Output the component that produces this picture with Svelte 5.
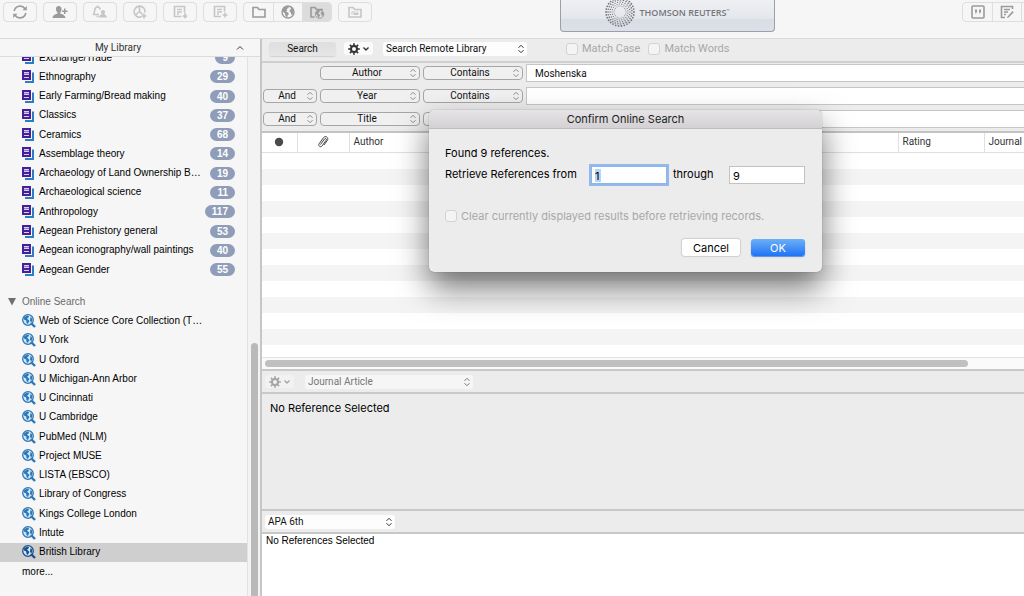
<svelte:options runes={true} />

<script lang="ts">
  interface Group {
    name: string;
    count: number;
  }

  const groups: Group[] = [
    { name: "Exchange/Trade", count: 9 },
    { name: "Ethnography", count: 29 },
    { name: "Early Farming/Bread making", count: 40 },
    { name: "Classics", count: 37 },
    { name: "Ceramics", count: 68 },
    { name: "Assemblage theory", count: 14 },
    { name: "Archaeology of Land Ownership B…", count: 19 },
    { name: "Archaeological science", count: 11 },
    { name: "Anthropology", count: 117 },
    { name: "Aegean Prehistory general", count: 53 },
    { name: "Aegean iconography/wall paintings", count: 40 },
    { name: "Aegean Gender", count: 55 },
  ];

  const sources = [
    "Web of Science Core Collection (T…",
    "U York",
    "U Oxford",
    "U Michigan-Ann Arbor",
    "U Cincinnati",
    "U Cambridge",
    "PubMed (NLM)",
    "Project MUSE",
    "LISTA (EBSCO)",
    "Library of Congress",
    "Kings College London",
    "Intute",
    "British Library",
  ];

  let selectedSource = $state("British Library");

  let criteria = $state([
    { join: "", field: "Author", value: "Moshenska" },
    { join: "And", field: "Year", value: "" },
    { join: "And", field: "Title", value: "" },
  ]);

  const fields = ["Author", "Year", "Title"];

  let from = $state("1");
  let through = $state("9");

  // concentric rings of dots for the logo
  const dots = [6, 8, 10, 12, 14].flatMap((radius, ring) => {
    const count = 18 + ring * 3;
    return Array.from({ length: count }, (_, i) => {
      const angle = ((i + ring * 0.5) / count) * Math.PI * 2;
      return {
        x: 15 + Math.cos(angle) * radius,
        y: 15 + Math.sin(angle) * radius,
        r: 0.5 + ring * 0.1,
      };
    });
  });

  const teeth = [0, 45, 90, 135, 180, 225, 270, 315];
</script>

{#snippet arrows()}
  <svg class="arrows" viewBox="0 0 8 10" width="8" height="10" aria-hidden="true">
    <path d="M1.5 3.8 4 1.3l2.5 2.5M1.5 6.2 4 8.7l2.5-2.5" />
  </svg>
{/snippet}

{#snippet gear()}
  <svg class="gear" viewBox="0 0 12 12" width="12" height="12" aria-hidden="true">
    {#each teeth as angle}
      <rect x="5.2" y="0.2" width="1.6" height="3" transform="rotate({angle} 6 6)" />
    {/each}
    <circle cx="6" cy="6" r="3" fill="none" stroke="currentColor" stroke-width="2" />
  </svg>
  <svg viewBox="0 0 8 6" width="8" height="6" aria-hidden="true">
    <path d="M1.5 1.5 4 4l2.5-2.5" fill="none" stroke="currentColor" stroke-width="1.4" />
  </svg>
{/snippet}

{#snippet globe()}
  <circle cx="8" cy="8" r="6" fill="none" stroke="currentColor" stroke-width="1.4" />
  <path
    fill="currentColor"
    stroke="none"
    d="M3 4 6 2l3 .5-.6 1.7-1.900.9.8 1.500-1.300.9 2 1 .9 1.400-1.300 1.700-.4 2L5.500 12 5 9.500 2.500 7.500zM10.500 3l2 1.500 1.200 3-.6 2.500-1.600 1-.7-2.500-1.300-1 .3-1.700 1.200-.6z"
  />
{/snippet}

<div class="window">
  <header class="toolbar">
    <div class="tools">
      <button class="tool" aria-label="Sync library">
        <svg viewBox="0 0 16 16" width="16" height="16" class="line">
          <path d="M2.200 7A6 6 0 0 1 13 4.700M13.800 9A6 6 0 0 1 3 11.300" />
          <path class="fill" d="M10.500 6.300h4.300V2zM5.500 9.700H1.200V14z" />
        </svg>
      </button>
      <button class="tool" aria-label="Share library">
        <svg viewBox="0 0 16 16" width="16" height="16">
          <path d="M6.500 2c2.200 0 3.200 1.400 3 3.500-.1 1.300-.6 2.200-1.200 2.900v1c1.700.7 4.900 1.300 5.200 4.600H.5c.2-3.300 3.300-3.900 5-4.600v-1C4.700 7.700 4.100 6.800 4 5.500 3.900 3.400 4.600 2 6.500 2z" />
          <path d="M12 4.500h1.500v2h2V8h-2v2H12V8h-2V6.500h2z" />
        </svg>
      </button>
      <button class="tool faint" aria-label="Activity feed">
        <svg viewBox="0 0 16 16" width="16" height="16" class="line">
          <path d="M1 10.500c1.500-1 1.500-2.500 1.700-4.500C3 4 4 3 5.500 3S8 4 8.300 5.500M1 10.500h6M5.500 3V1.500M4.500 12.500h2" />
          <path class="fill" d="M11 6c1.500 0 2.200 1 2 2.500-.1.8-.4 1.300-.8 1.700 1.200.6 2.600 1.300 2.800 3.300H7c.2-2 1.500-2.700 2.800-3.300-.4-.4-.7-.9-.8-1.700C8.800 7 9.500 6 11 6z" />
        </svg>
      </button>
      <button class="tool faint" aria-label="Capture reference">
        <svg viewBox="0 0 16 16" width="16" height="16" class="line">
          <path d="M9.500 12.800A5.500 5.500 0 1 1 13 8.500M7.500 2.500v5L3.500 11M7.500 7.500l3 3M12 9.500v5M9.500 12h5" />
        </svg>
      </button>
      <button class="tool faint" aria-label="Import references">
        <svg viewBox="0 0 16 16" width="16" height="16" class="line">
          <path d="M9.500 12.500H2.500v-10h10V8M5 5.500h5M5 8h5M5 10h2M13 8.500v5M11 11.500l2 2 2-2" />
        </svg>
      </button>
      <button class="tool faint" aria-label="New reference">
        <svg viewBox="0 0 16 16" width="16" height="16" class="line">
          <path d="M9 12.500H2.500v-10h10V7.500M5 5.500h5M5 8h5M5 10h2M13 8.500v5M10.500 11h5" />
        </svg>
      </button>
      <div class="segments">
        <button aria-label="Local library">
          <svg viewBox="0 0 16 16" width="16" height="16" class="line">
            <path d="M2 13V3.500h4.500l1.500 2h6V13z" />
          </svg>
        </button>
        <button aria-label="Online search">
          <svg viewBox="0 0 16 16" width="16" height="16">{@render globe()}</svg>
        </button>
        <button class="active" aria-label="Integrated library and online search">
          <svg viewBox="0 0 16 16" width="16" height="16" class="line">
            <path d="M5.500 13H2V3.500h4l1.500 2H14" />
            <g transform="translate(5 4.500) scale(.7)">{@render globe()}</g>
          </svg>
        </button>
      </div>
      <button class="tool faint" aria-label="Open group">
        <svg viewBox="0 0 16 16" width="16" height="16" class="line">
          <path d="M2 13V3.500h4l1.500 2H14V13z" />
          <path class="fill" d="M4.500 7.500h4v1h-3v2h-1zM6.500 9h5v2h-5zM9.500 7.500h2v1h-2z" />
        </svg>
      </button>
    </div>

    <div class="brand">
      <svg viewBox="0 0 30 30" width="30" height="30" aria-hidden="true">
        {#each dots as dot}
          <circle cx={dot.x} cy={dot.y} r={dot.r} />
        {/each}
      </svg>
      <span>THOMSON REUTERS<sup>™</sup></span>
    </div>

    <div class="segments trailing">
      <button aria-label="Insert citation">
        <svg viewBox="0 0 16 16" width="16" height="16" class="line">
          <rect x="2" y="2" width="12" height="12" rx="1" />
          <path class="fill" d="M5 5.500h2V8L6 9.500H5L5.600 8H5zM9 5.500h2V8l-1 1.500H9L9.600 8H9z" />
        </svg>
      </button>
      <button aria-label="Format bibliography">
        <svg viewBox="0 0 16 16" width="16" height="16" class="line">
          <path d="M6 13.500H2.500v-11h11V5M5 5.500h6M5 8h4M5 10.500h2" />
          <path class="fill" d="m8.500 12.500 5-5.500 1.200 1.200-5 5.300-1.700.5z" />
        </svg>
      </button>
      <button aria-label="Word processor"></button>
    </div>
  </header>

  <div class="content">
    <aside class="sidebar">
      <div class="library-head">
        <h1>My Library</h1>
        <svg viewBox="0 0 8 6" width="8" height="6" aria-hidden="true">
          <path d="M1 4.500 4 1.500l3 3" fill="none" stroke="currentColor" />
        </svg>
      </div>
      <div class="tree-area">
        <ul class="tree">
          {#each groups as group}
            <li class="row">
              <svg viewBox="0 0 12 13" width="12" height="13" aria-hidden="true">
                <path d="M11 2.500v9.500H3" fill="none" stroke="#2f7cc4" stroke-width="2" />
                <path d="M0 0h9v10H0z" fill="#44209a" />
                <path d="M2 2h5v3H2zM2 7h5v1H2z" fill="#d8d0f0" />
                <path d="M2 3h5v1H2z" fill="#8d78cc" />
              </svg>
              <span class="name">{group.name}</span>
              <span class="count">{group.count}</span>
            </li>
          {/each}
          <li class="row section">
            <svg viewBox="0 0 8 8" width="8" height="8" aria-hidden="true">
              <path d="M0 0h8L4 7.500z" fill="#707070" />
            </svg>
            <span>Online Search</span>
          </li>
          {#each sources as source}
            <li class="row source" class:selected={selectedSource === source}>
              <svg viewBox="0 0 14 14" width="14" height="14" aria-hidden="true">
                <circle cx="6" cy="6" r="5.300" fill="#d4e8f7" stroke="currentColor" stroke-width="1.300" />
                <path
                  d="M2 3.500 5 1.500l2 .5-.5 1.500-1.500 1 1.500 1.500 1 1-1 1.500-.5 1.500-1.500-1L4.200 6.500 2 5.500zM8.500 3l1.700 1.500V7L9 8.500 8 6.500z"
                  fill="currentColor"
                />
                <path d="m9 9 4 4" stroke="currentColor" stroke-width="2.400" />
              </svg>
              <button class="name" onclick={() => (selectedSource = source)}>{source}</button>
            </li>
          {/each}
          <li class="row"><button>more...</button></li>
        </ul>
        <div class="track"><div class="thumb"></div></div>
      </div>
    </aside>

    <main>
      <div class="search-bar">
        <button class="search-btn">Search</button>
        <button class="gear-btn" aria-label="Search options">{@render gear()}</button>
        <span class="picker scope">
          <select aria-label="Search scope"><option>Search Remote Library</option></select>
          {@render arrows()}
        </span>
        <label class="check"><input type="checkbox" disabled /> Match Case</label>
        <label class="check"><input type="checkbox" disabled /> Match Words</label>
      </div>

      <div class="criteria">
        {#each criteria as row}
          <div class="criterion">
            {#if row.join}
              <span class="picker outlined">
                <select aria-label="Operator" bind:value={row.join}>
                  <option>And</option>
                  <option>Or</option>
                  <option>Not</option>
                </select>
                {@render arrows()}
              </span>
            {:else}
              <span></span>
            {/if}
            <span class="picker outlined">
              <select aria-label="Field" bind:value={row.field}>
                {#each fields as field}
                  <option>{field}</option>
                {/each}
              </select>
              {@render arrows()}
            </span>
            <span class="picker outlined">
              <select aria-label="Comparison"><option>Contains</option></select>
              {@render arrows()}
            </span>
            <input type="text" aria-label="Search text" bind:value={row.value} />
          </div>
        {/each}
      </div>

      <div class="results">
        <table>
          <thead>
            <tr>
              <th class="status">
                <svg viewBox="0 0 10 10" width="10" height="10" role="img" aria-label="Read">
                  <circle cx="5" cy="5" r="4.200" fill="#4a4a4a" />
                </svg>
              </th>
              <th class="clip">
                <svg viewBox="0 0 12 14" width="12" height="14" role="img" aria-label="Attachment">
                  <path
                    d="m3.500 9.500 4-5.500c1-1.200 2.500 0 1.700 1.200L5 11c-1.500 1.800-4.200 0-2.900-2.200L6.500 2.600C8.500.2 12 2.500 10.400 5.300L7 10"
                    fill="none"
                    stroke="#444"
                  />
                </svg>
              </th>
              <th>Author</th>
              <th class="rating">Rating</th>
              <th class="journal">Journal</th>
            </tr>
          </thead>
        </table>
        <div class="stripes"></div>
        <div class="hscroll"><div class="hthumb"></div></div>
      </div>

      <div class="bar">
        <button class="gear-btn" aria-label="Reference options" disabled>{@render gear()}</button>
        <span class="picker type">
          <select aria-label="Reference type" disabled><option>Journal Article</option></select>
          {@render arrows()}
        </span>
      </div>
      <section class="reference">No Reference Selected</section>
      <div class="bar">
        <span class="picker style">
          <select aria-label="Output style"><option>APA 6th</option></select>
          {@render arrows()}
        </span>
      </div>
      <section class="preview">No References Selected</section>
    </main>
  </div>

  <div class="dialog" role="dialog" aria-labelledby="dialog-title">
    <h2 id="dialog-title">Confirm Online Search</h2>
    <div class="dialog-body">
      <p>Found 9 references.</p>
      <div class="range">
        <label for="from">Retrieve References from</label>
        <input id="from" class="focused" type="text" bind:value={from} />
        <label for="through">through</label>
        <input id="through" type="text" bind:value={through} />
      </div>
      <label class="check">
        <input type="checkbox" disabled /> Clear currently displayed results before retrieving records.
      </label>
      <div class="actions">
        <button>Cancel</button>
        <button class="primary">OK</button>
      </div>
    </div>
  </div>
</div>

<style>
  :global(body) {
    margin: 0;
  }

  .window {
    position: relative;
    display: flex;
    flex-direction: column;
    height: 100vh;
    overflow: hidden;
    background: #f6f6f6;
    color: #111;
    font-family: Roboto, "Liberation Sans", sans-serif;
    font-size: 10px;
    line-height: 14px;
  }

  .window * {
    box-sizing: border-box;
  }

  button,
  input,
  select {
    margin: 0;
    padding: 0;
    border: 0;
    background: none;
    color: inherit;
    font: inherit;
  }

  svg {
    display: block;
    flex: none;
    fill: currentColor;
  }

  .line {
    fill: none;
    stroke: currentColor;
    stroke-width: 1.6;
  }

  .line .fill {
    fill: currentColor;
    stroke: none;
  }

  /* toolbar */
  .toolbar {
    display: flex;
    flex: none;
    justify-content: space-between;
    height: 38px;
    padding-left: 3px;
  }

  .tools {
    display: flex;
    gap: 6px;
    padding-top: 2px;
  }

  .tool,
  .segments {
    height: 20px;
    border: 1px solid #dedede;
    border-radius: 4px;
    color: #9b9b9b;
  }

  .tool {
    display: grid;
    place-items: center;
    width: 34px;
  }

  .tool.faint {
    color: #c6c6c6;
  }

  .segments {
    display: flex;
    overflow: hidden;
  }

  .segments button {
    display: grid;
    place-items: center;
    width: 29px;
  }

  .segments button + button {
    border-left: 1px solid #dedede;
  }

  .segments .active {
    background: #dcdcdc;
  }

  .trailing {
    margin: 2px -27px 0 0;
  }

  .brand {
    display: flex;
    align-items: center;
    justify-content: center;
    gap: 5px;
    width: 215px;
    height: 32px;
    padding-bottom: 8px;
    border: 1px solid #9b9fac;
    border-top: 0;
    border-radius: 0 0 4px 4px;
    background: linear-gradient(#eef0f4 0%, #e4e6eb 60%, #d9dde5 62%, #dde0e7 100%);
    color: #74767c;
    font-family: "Open Sans", sans-serif;
    font-size: 9px;
    font-weight: 600;
  }

  .brand sup {
    font-size: 4px;
  }

  .content {
    display: flex;
    flex: 1;
    min-height: 0;
    border-top: 1px solid #dadada;
  }

  /* sidebar */
  .sidebar {
    display: flex;
    flex: none;
    flex-direction: column;
    width: 262px;
    border-right: 2px solid #c6c6c6;
    font-family: "Liberation Sans", sans-serif;
  }

  .library-head {
    display: flex;
    flex: none;
    align-items: center;
    height: 18px;
    padding-right: 16px;
    border-bottom: 1px solid #dcdcdc;
    color: #333;
  }

  h1 {
    flex: 1;
    margin: 0;
    font-family: Roboto, sans-serif;
    font-size: 10px;
    font-weight: 400;
    text-align: center;
  }

  .tree-area {
    display: flex;
    flex: 1;
    min-height: 0;
    overflow: hidden;
  }

  .tree {
    display: flex;
    flex: 1;
    flex-direction: column;
    min-width: 0;
    margin: -9px 0 15px;
    padding: 0;
    list-style: none;
  }

  .row {
    display: flex;
    flex: 1 1 19px;
    align-items: center;
    gap: 5px;
    min-height: 19px;
    max-height: 20px;
    padding: 0 12px 0 22px;
    color: #000;
    white-space: nowrap;
  }

  .row .name {
    flex: 1;
    text-align: left;
  }

  .source {
    gap: 3px;
    color: #2b78b8;
  }

  .source button {
    color: #000;
  }

  .selected {
    background: #cfcfcf;
    color: #1b4f8c;
  }

  .section {
    gap: 6px;
    margin-top: 13px;
    padding-left: 8px;
    color: #6a6a6a;
  }

  .count {
    padding: 0 7px;
    border-radius: 7px;
    background: #8f9db9;
    color: #fff;
    font-weight: 700;
    line-height: 13px;
  }

  .track {
    display: flex;
    flex: none;
    align-items: flex-end;
    justify-content: center;
    width: 13px;
    border-left: 1px solid #e2e2e2;
    background: #f3f3f3;
  }

  .thumb {
    width: 7px;
    height: 47%;
    border-radius: 4px 4px 0 0;
    background: #b9b9b9;
  }

  /* main column */
  main {
    display: flex;
    flex: 1;
    flex-direction: column;
    min-width: 0;
    background: #ececec;
  }

  .search-bar {
    display: flex;
    flex: none;
    align-items: center;
    height: 24px;
    padding: 0 7px 3px;
    border-bottom: 2px solid #cfcfcf;
  }

  .search-btn {
    width: 67px;
    height: 14px;
    margin-right: 8px;
    border-radius: 3px;
    background: linear-gradient(#dedede, #e6e6e6);
    box-shadow: 0 1px 1px #d2d2d2;
  }

  .gear-btn {
    display: flex;
    align-items: center;
    justify-content: center;
    gap: 2px;
    width: 29px;
    height: 13px;
    border-radius: 3px;
    background: #fbfbfb;
    color: #333;
  }

  .gear-btn:disabled {
    background: #f2f2f2;
    color: #a5a5a5;
  }

  .picker {
    position: relative;
    display: block;
    height: 14px;
  }

  .picker select {
    appearance: none;
    width: 100%;
    height: 100%;
    padding: 0 12px 0 3px;
    border-radius: 3px;
    background: #fdfdfd;
    line-height: 12px;
    opacity: 1;
  }

  .picker select:disabled {
    background: #f6f6f6;
    color: #777;
  }

  .picker :global(.arrows) {
    position: absolute;
    top: 2px;
    right: 2px;
    fill: none;
    stroke: #333;
    pointer-events: none;
  }

  .outlined select {
    padding: 0 10px 0 4px;
    border: 1px solid #a6a6a6;
    border-radius: 4px;
    background: #f0f0f0;
    text-align: center;
    text-align-last: center;
  }

  .outlined :global(.arrows) {
    right: 3px;
    stroke: #8a8a8a;
  }

  .scope {
    width: 144px;
    margin: 0 39px 0 10px;
  }

  .check {
    display: flex;
    align-items: center;
    gap: 4px;
    margin-right: 8px;
    color: #a8a8a8;
    font-size: 11px;
    white-space: nowrap;
  }

  .check input {
    appearance: none;
    width: 12px;
    height: 12px;
    border: 1px solid #d3d3d3;
    border-radius: 3px;
    background: #f4f4f4;
  }

  .criteria {
    display: grid;
    flex: none;
    gap: 5px;
    padding: 1px 0 3px 1px;
    border-bottom: 2px solid #c3c3c3;
  }

  .criterion {
    display: grid;
    grid-template-columns: 54px 100px 100px 1fr;
    align-items: center;
    gap: 3px;
  }

  .criterion input {
    height: 18px;
    padding: 0 8px;
    border: 1px solid #c6c6c6;
    border-right: 0;
    background: #fff;
  }

  /* results */
  .results {
    display: flex;
    flex: 1;
    flex-direction: column;
    min-height: 0;
    background: #fff;
  }

  table {
    width: 100%;
    border-collapse: collapse;
    table-layout: fixed;
  }

  th {
    height: 19px;
    padding: 0 0 0 4px;
    border-bottom: 1px solid #e0e0e0;
    border-left: 1px solid #e0e0e0;
    color: #333;
    font-weight: 400;
    text-align: left;
  }

  th svg {
    margin: 0 auto;
  }

  .status {
    width: 35px;
    padding: 0;
    border-left: 0;
  }

  .clip {
    width: 52px;
    padding: 0;
  }

  .rating {
    width: 86px;
  }

  .journal {
    width: 40px;
  }

  .stripes {
    flex: 1;
    background: repeating-linear-gradient(#fff 0 16px, #f4f4f4 16px 32px);
  }

  .hscroll {
    flex: none;
    height: 12px;
    padding: 2px 56px 0 3px;
    border-top: 1px solid #e4e4e4;
    background: #fafafa;
  }

  .hthumb {
    height: 7px;
    border-radius: 4px;
    background: #c0c0c0;
  }

  .bar {
    display: flex;
    flex: none;
    align-items: center;
    height: 25px;
    padding: 0 3px;
    border-top: 2px solid #c8c8c8;
    border-bottom: 2px solid #c8c8c8;
  }

  .type {
    width: 168px;
    margin-left: 11px;
  }

  .type :global(.arrows) {
    stroke: #777;
  }

  .style {
    width: 130px;
  }

  .reference {
    flex: none;
    height: 115px;
    padding: 7px 8px;
    color: #000;
    font-family: Inter, sans-serif;
    font-size: 11px;
  }

  .preview {
    flex: none;
    height: 62px;
    padding: 0 4px;
    background: #fff;
    color: #000;
    font-family: "Liberation Sans", sans-serif;
  }

  /* dialog */
  .dialog {
    position: absolute;
    top: 110px;
    left: 429px;
    width: 393px;
    border-radius: 5px;
    background: #ececec;
    box-shadow:
      0 0 1px rgba(0, 0, 0, 0.5),
      0 16px 32px rgba(0, 0, 0, 0.55);
    color: #000;
    font-family: Inter, sans-serif;
    font-size: 11px;
  }

  h2 {
    margin: 0;
    border-bottom: 1px solid #bdbbbd;
    border-radius: 5px 5px 0 0;
    background: linear-gradient(#e6e4e6, #d3d1d3);
    color: #222;
    font-size: 11px;
    font-weight: 400;
    line-height: 18px;
    text-align: center;
  }

  .dialog-body {
    padding: 17px 17px 16px 16px;
  }

  .dialog p {
    margin: 0 0 6px;
  }

  .range {
    display: grid;
    grid-template-columns: 1fr 76px 50px 76px;
    gap: 6px;
    margin-bottom: 25px;
  }

  .range label {
    padding-top: 1px;
  }

  .range input {
    height: 18px;
    padding: 2px 3px 0;
    border: 1px solid #c2c2c2;
    background: #fff;
  }

  .range .focused {
    border-color: #8fb5e8;
    background: linear-gradient(#b5d5fb, #b5d5fb) 3px 2px / 6px 13px no-repeat #fff;
    box-shadow: 0 0 0 2px #93b9ec;
  }

  .actions {
    display: flex;
    justify-content: flex-end;
    gap: 11px;
    margin-top: 16px;
  }

  .actions button {
    width: 58px;
    height: 17px;
    border-radius: 3px;
    background: #fff;
    box-shadow: 0 0 1px 1px #d0d0d0;
  }

  .actions .primary {
    width: 54px;
    background: linear-gradient(#6cb0f8, #1f74f6);
    box-shadow: 0 1px 1px #5a8fd8;
    color: #fff;
  }
</style>
